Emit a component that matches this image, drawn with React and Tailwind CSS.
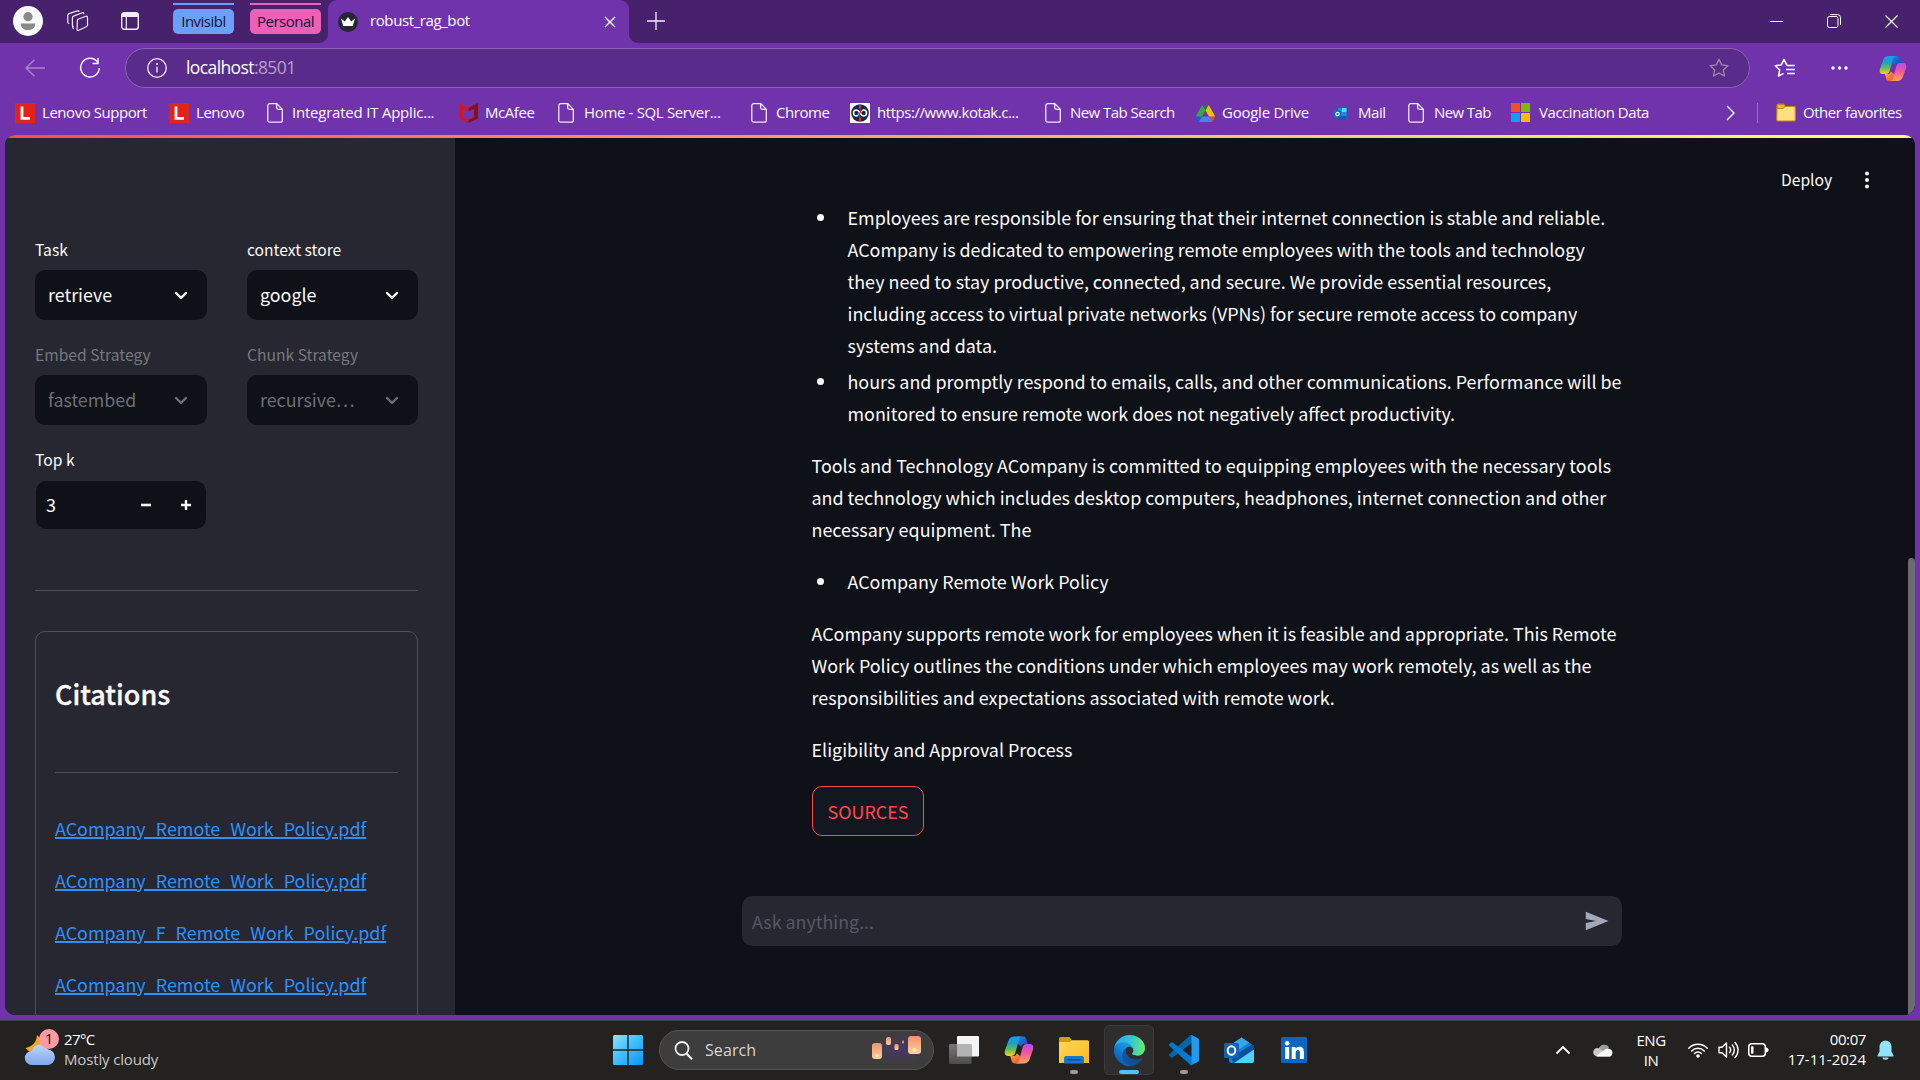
import React from "react";

const UI = "font-['Open_Sans','Noto_Sans',sans-serif]";
const APP = "font-['Noto_Sans_CJK_JP','Noto_Sans',sans-serif]";

/* ---------- icons ---------- */

const Svg = ({ w, h, box, className = "", children }) => (
  <svg width={w} height={h} viewBox={box || `0 0 ${w} ${h}`} fill="none" className={`shrink-0 ${className}`}>
    {children}
  </svg>
);

const CopilotIcon = ({ w, h, id }) => (
  <Svg w={w} h={h} box="0 0 30 28">
    <defs>
      <linearGradient id={`${id}a`} x1="0" y1="0" x2="0" y2="1">
        <stop offset="0" stopColor="#1b9df0" />
        <stop offset=".35" stopColor="#1c9fc4" />
        <stop offset=".7" stopColor="#6cc04e" />
        <stop offset="1" stopColor="#ffd21f" />
      </linearGradient>
      <linearGradient id={`${id}b`} x1="0" y1="0" x2="0" y2="1">
        <stop offset="0" stopColor="#b04df2" />
        <stop offset=".45" stopColor="#f2569b" />
        <stop offset="1" stopColor="#ffa759" />
      </linearGradient>
      <linearGradient id={`${id}c`} x1="0" y1="0" x2="1" y2="1">
        <stop offset="0" stopColor="#1a8ef0" />
        <stop offset="1" stopColor="#1b3fb8" />
      </linearGradient>
      <linearGradient id={`${id}d`} x1="0" y1="0" x2="1" y2="1">
        <stop offset="0" stopColor="#ffb22e" />
        <stop offset="1" stopColor="#f2453f" />
      </linearGradient>
    </defs>
    <path d="M13 .5h6c2.400 0 3 1.600 3.600 3.600l1.200 4h-3.500c-1.800 0-2.600 1-3.100 2.600L14 8z" fill={`url(#${id}c)`} />
    <path d="M17 27.500h-6c-2.400 0-3-1.600-3.600-3.600l-1.200-4h3.500c1.800 0 2.600-1 3.100-2.600L16 20z" fill={`url(#${id}d)`} />
    <path d="M10.500.5H18c-2.200.3-3 2.800-3.700 5.500l-2.600 9.600c-.7 2.600-1.700 4.400-4.200 4.400H4.300C1.200 20 .1 17.600 1 14.500L4.400 4.800C5.500 1.800 7.500.5 10.500.5z" fill={`url(#${id}a)`} />
    <path d="M19.500 27.500H12c2.200-.3 3-2.800 3.700-5.500l2.600-9.600c.7-2.600 1.700-4.400 4.200-4.400h3.200c3.100 0 4.200 2.400 3.300 5.500l-3.400 9.700c-1.100 3-3.100 4.300-6.100 4.300z" fill={`url(#${id}b)`} />
  </Svg>
);

const PageIcon = () => (
  <Svg w={16} h={20}>
    <path d="M2.800.7h7l5.500 5.500v11a2 2 0 0 1-2 2H2.800a2 2 0 0 1-2-2V2.700a2 2 0 0 1 2-2z M9.600.9v3.700a1.800 1.800 0 0 0 1.800 1.800h3.700" stroke="#efe6f7" strokeWidth="1.300" />
  </Svg>
);

const LenovoIcon = () => (
  <Svg w={20} h={20}>
    <path d="M0 0h20v20H0z" fill="#e2231a" />
    <path d="M7 3.500v11.800h8" stroke="#fff" strokeWidth="2.800" />
  </Svg>
);

const McAfeeIcon = () => (
  <Svg w={19} h={20}>
    <path d="M0 0l9.500 5v3.600L4 5.800v8.400l5.500 2.600V20L0 15.500z" fill="#d01620" />
    <path d="M19 0L9.500 5v3.600L15 5.800v8.400l-5.500 2.600V20L19 15.500z" fill="#85101c" />
  </Svg>
);

const KotakIcon = () => (
  <Svg w={20} h={20}>
    <path d="M0 0h20v20H0z" fill="#fff" />
    <circle cx="10" cy="10" r="8.800" fill="#12284f" />
    <path d="M10 10C8.500 7.600 7.500 7 6.500 7a3 3 0 0 0 0 6c1 0 2-.6 3.500-3s2.500-3 3.500-3a3 3 0 0 1 0 6c-1 0-2-.6-3.500-3z" stroke="#fff" strokeWidth="1.500" />
    <path d="M10 2v4M10 14v4" stroke="#e8232b" strokeWidth="2" />
    <path d="M11.500 7l-3 6" stroke="#e8232b" strokeWidth="1.300" />
  </Svg>
);

const DriveIcon = () => (
  <Svg w={19} h={17} box="0 0 87.300 78" className="mt-[2px]">
    <path d="m6.600 66.850 3.850 6.650c.8 1.400 1.950 2.500 3.300 3.300l13.750-23.800h-27.500c0 1.550.4 3.100 1.200 4.500z" fill="#0066da" />
    <path d="m43.650 25-13.750-23.800c-1.350.8-2.500 1.900-3.300 3.300l-25.400 44a9 9 0 0 0-1.200 4.500h27.500z" fill="#34a853" />
    <path d="m73.550 76.800c1.350-.8 2.500-1.900 3.300-3.300l1.600-2.750 7.650-13.250c.8-1.400 1.200-2.950 1.200-4.500h-27.502l5.852 11.500z" fill="#ea4335" />
    <path d="m43.650 25 13.750-23.800c-1.350-.8-2.900-1.200-4.500-1.200h-18.500c-1.600 0-3.150.45-4.500 1.200z" fill="#188038" />
    <path d="m59.800 53h-32.300l-13.750 23.800c1.350.8 2.900 1.200 4.500 1.200h50.800c1.600 0 3.150-.45 4.500-1.200z" fill="#4285f4" />
    <path d="m73.400 26.500-12.700-22c-.8-1.400-1.950-2.500-3.300-3.300l-13.750 23.800 16.150 28h27.450c0-1.550-.4-3.100-1.200-4.500z" fill="#fbbc04" />
  </Svg>
);

const MailIcon = () => (
  <Svg w={13} h={12} className="mt-[2px]">
    <path d="M4 0h8.500v12H4z" fill="#1490df" />
    <path d="M8 0h4.500v4H8z" fill="#50d9ff" />
    <path d="M4 8h8.500v4H4z" fill="#0a5bb0" />
    <path d="M0 2.500h7v7H0z" fill="#0f6cc4" />
    <circle cx="3.500" cy="6" r="1.700" stroke="#fff" strokeWidth="1.100" />
  </Svg>
);

const MicrosoftIcon = () => (
  <Svg w={19} h={19}>
    <path d="M0 0h9v9H0z" fill="#f25022" />
    <path d="M10 0h9v9h-9z" fill="#7fba00" />
    <path d="M0 10h9v9H0z" fill="#00a4ef" />
    <path d="M10 10h9v9h-9z" fill="#ffb900" />
  </Svg>
);

const FolderIcon = () => (
  <Svg w={20} h={19}>
    <path d="M1 2.500A1.500 1.500 0 0 1 2.500 1h5l2 2.500H18A1.300 1.300 0 0 1 19.300 5v11.500A1.500 1.500 0 0 1 17.800 18H2.200a1.500 1.500 0 0 1-1.500-1.500z" fill="#ffdf85" stroke="#b98a12" strokeWidth="1.200" />
    <path d="M1.200 5.500V2.700c0-.7.5-1.200 1.200-1.200h4.900L9 3.400 7.300 5.500z" fill="#f3bb27" stroke="#a67a10" strokeWidth=".8" />
  </Svg>
);

const Chevron = ({ dim }) => (
  <Svg w={14} h={9}>
    <path d="M2 2l5 4.800L12 2" stroke={dim ? "#6d6f74" : "#fafafa"} strokeWidth="2.400" strokeLinecap="round" strokeLinejoin="round" />
  </Svg>
);

/* ---------- browser chrome ---------- */

function TitleBar() {
  return (
    <div className="flex h-[43px] shrink-0 bg-[#7033ab]">
      <div className="flex w-[328px] items-start rounded-br-[9px] bg-[#48216d]">
        <div className="mt-[6px] ml-[13px]">
          <Svg w={30} h={30}>
            <circle cx="15" cy="15" r="15" fill="#fafafa" />
            <circle cx="15" cy="10.700" r="4.600" fill="#8a8a8a" />
            <path d="M7.800 17.500h14.400v.8c0 3.600-3.200 5.800-7.200 5.800s-7.200-2.200-7.200-5.800z" fill="#8a8a8a" />
          </Svg>
        </div>
        <div className="mt-[10px] ml-[24px]">
          <Svg w={22} h={22}>
            <g stroke="#efe6f7" strokeWidth="1.200" strokeLinejoin="round" strokeLinecap="round">
              <path d="M10.500 9.500l8.300-3.200q1.700-.5 1.700 1.200v7.500q0 1.200-1.200 1.700l-7.600 3.600q-1.700.7-1.700-1z" />
              <path d="M6.200 16.300q-.8 0-.8-1.300V7.800q0-1.200 1.200-1.700l8.600-3.400q1.300-.4 1.700.9" />
              <path d="M1.800 13.500q-1-.3-1-1.500V5.300q0-1.200 1.200-1.700L10.300.9q1.400-.4 1.800.6" />
              <path d="M6.300 18.500q-.9-1.200-.8-3" />
            </g>
          </Svg>
        </div>
        <div className="mt-[12px] ml-[32px]">
          <Svg w={18} h={18}>
            <rect x=".7" y=".7" width="16.600" height="16.600" rx="2.500" stroke="#f3edf9" strokeWidth="1.400" />
            <path d="M.7 5V3Q.7.7 3 .7h12q2.300 0 2.300 2.300v2z" fill="#f3edf9" />
            <path d="M5.300 5v12" stroke="#f3edf9" strokeWidth="1.200" />
          </Svg>
        </div>
        <div className="ml-[34px] flex gap-[16px] pt-[3px] text-[15px] tracking-[-0.5px] text-[#1b1033]">
          <div className="w-[61px] border-t-2 border-[#69a1fa] pt-[4px]">
            <div className="flex h-[25px] items-center justify-center rounded-[5px] bg-[#69a1fa] pb-px">Invisibl</div>
          </div>
          <div className="w-[71px] border-t-2 border-[#ee5fb7] pt-[4px]">
            <div className="flex h-[25px] items-center justify-center rounded-[5px] bg-[#ee5fb7] pb-px">Personal</div>
          </div>
        </div>
      </div>
      <div className="w-[301px] bg-[#48216d]">
        <div className="flex h-full items-center rounded-t-[9px] bg-[#7033ab] pl-[10px] text-white">
          <Svg w={20} h={20}>
            <circle cx="10" cy="10" r="10" fill="#262730" />
            <path d="M3 6.500l3.800 3L10 5l3.200 4.500 3.800-3-2.300 7.500H5.300z" fill="#fff" />
          </Svg>
          <span className="mb-[3px] ml-[12px] text-[15px] leading-[20px] tracking-[-0.4px]">robust_rag_bot</span>
          <Svg w={12} h={12} className="mr-[13px] ml-auto">
            <path d="M1 1l10 10M11 1L1 11" stroke="#fff" strokeWidth="1.400" />
          </Svg>
        </div>
      </div>
      <div className="flex flex-1 items-center rounded-bl-[9px] bg-[#48216d] pr-[22px] pb-px pl-[18px]">
        <Svg w={18} h={18}>
          <path d="M9 0v18M0 9h18" stroke="#f3edf9" strokeWidth="1.300" />
        </Svg>
        <Svg w={13} h={12} className="ml-auto">
          <path d="M0 6.500h13" stroke="#fff" />
        </Svg>
        <Svg w={14} h={14} className="ml-[44px]">
          <rect x=".5" y="2.500" width="10.500" height="11" rx="2" stroke="#fff" />
          <path d="M3 .6h7.500a3 3 0 0 1 3 3V11" stroke="#fff" />
        </Svg>
        <Svg w={13} h={13} className="ml-[44px]">
          <path d="M.5.5l12 12M12.500.5l-12 12" stroke="#fff" strokeWidth="1.100" />
        </Svg>
      </div>
    </div>
  );
}

const STAR = "M10 1.300l2.700 5.600 6.100.8-4.500 4.200 1.200 6.100L10 15.100 4.500 18l1.200-6.100L1.200 7.700l6.100-.8z";

function AddressBar() {
  return (
    <div className="flex h-[50px] shrink-0 items-center bg-[#7033ab] pr-[13px] pl-[25px]">
      <Svg w={20} h={18}>
        <path d="M20 9H1M9.500.7L1 9l8.500 8.300" stroke="#a884cd" strokeWidth="1.400" />
      </Svg>
      <Svg w={22} h={22} className="ml-[34px]">
        <path d="M18.600 5.300A9.300 9.300 0 1 0 20.300 11" stroke="#f7f2fb" strokeWidth="1.500" />
        <path d="M19 1v5.500h-5.500" stroke="#f7f2fb" strokeWidth="1.500" />
      </Svg>
      <div className="ml-[24px] flex h-[40px] w-[1625px] items-center rounded-full border border-[#8a63b1] bg-[#592b8a] pr-[20px] pl-[21px]">
        <Svg w={20} h={20}>
          <circle cx="10" cy="10" r="9.300" stroke="#f0e9f7" strokeWidth="1.300" />
          <path d="M10 8.800v5.700" stroke="#f0e9f7" strokeWidth="1.400" />
          <circle cx="10" cy="6" r="1" fill="#f0e9f7" />
        </Svg>
        <div className="mb-[2px] ml-[19px] text-[17.500px] leading-[22px] tracking-[-0.6px] text-white">
          localhost<span className="text-[#b2a0c6]">:8501</span>
        </div>
        <Svg w={20} h={20} className="ml-auto">
          <path d={STAR} stroke="#9b86a8" strokeWidth="1.400" strokeLinejoin="round" />
        </Svg>
      </div>
      <Svg w={21} h={20} className="ml-[24px]">
        <path d="M13.400 7L12.700 6.900 10 1.300 7.300 6.900 1.200 7.700l4.500 4.200L4.500 18l5-2.700" stroke="#fff" strokeWidth="1.500" strokeLinejoin="round" />
        <path d="M13 7.500h8M12 11.500h9M13 15.500h8" stroke="#fff" strokeWidth="1.500" />
      </Svg>
      <Svg w={17} h={4} className="ml-[36px]">
        <circle cx="2" cy="2" r="1.700" fill="#fff" />
        <circle cx="8.500" cy="2" r="1.700" fill="#fff" />
        <circle cx="15" cy="2" r="1.700" fill="#fff" />
      </Svg>
      <div className="ml-auto">
        <CopilotIcon w={28} h={27} id="ct" />
      </div>
    </div>
  );
}

const BOOKMARKS = [
  { width: "w-[154px]", gap: "gap-[7px]", icon: <LenovoIcon />, text: "Lenovo Support" },
  { width: "w-[98px]", gap: "gap-[7px]", icon: <LenovoIcon />, text: "Lenovo" },
  { width: "w-[192px]", gap: "gap-[9px]", tracking: "tracking-[-0.22px]", icon: <PageIcon />, text: "Integrated IT Applic..." },
  { width: "w-[99px]", gap: "gap-[7px]", icon: <McAfeeIcon />, text: "McAfee" },
  { width: "w-[193px]", gap: "gap-[10px]", tracking: "tracking-[-0.34px]", icon: <PageIcon />, text: "Home - SQL Server..." },
  { width: "w-[99px]", gap: "gap-[9px]", icon: <PageIcon />, text: "Chrome" },
  { width: "w-[195px]", gap: "gap-[7px]", icon: <KotakIcon />, text: "https://www.kotak.c..." },
  { width: "w-[151px]", gap: "gap-[9px]", tracking: "tracking-[-0.55px]", icon: <PageIcon />, text: "New Tab Search" },
  { width: "w-[138px]", gap: "gap-[7px]", tracking: "tracking-[-0.25px]", icon: <DriveIcon />, text: "Google Drive" },
  { width: "w-[74px]", gap: "gap-[11px]", icon: <MailIcon />, text: "Mail" },
  { width: "w-[103px]", gap: "gap-[10px]", tracking: "tracking-[-0.6px]", icon: <PageIcon />, text: "New Tab" },
  { width: "w-[215px]", gap: "gap-[9px]", icon: <MicrosoftIcon />, text: "Vaccination Data" },
];

function BookmarksBar() {
  return (
    <div className="flex h-[42px] shrink-0 items-center bg-[#7033ab] pb-[3px] pl-[15px] text-[15px] leading-[20px] tracking-[-0.45px] whitespace-nowrap text-[#fbf9fd]">
      {BOOKMARKS.map((b, i) => (
        <div key={i} className={`flex shrink-0 items-center ${b.width} ${b.gap}`}>
          {b.icon}
          <span className={`mb-[2px] ${b.tracking || ""}`}>{b.text}</span>
        </div>
      ))}
      <Svg w={9} h={16}>
        <path d="M1 1l7 7-7 7" stroke="#fff" strokeWidth="1.400" />
      </Svg>
      <div className="ml-[22px] h-[20px] w-px bg-[#9a70c4]" />
      <div className="ml-[18px] flex items-center gap-[7px]">
        <FolderIcon />
        <span className="mb-[2px]">Other favorites</span>
      </div>
    </div>
  );
}

/* ---------- application ---------- */

function SelectField({ label, value, dim }) {
  return (
    <div>
      <div className={`mb-[6px] h-[28px] text-[15.650px] leading-[27px] ${dim ? "text-[#77787d]" : "text-[#fafafa]"}`}>{label}</div>
      <div className="flex h-[50px] items-center justify-between rounded-[10px] bg-[#0e1117] pr-[19px] pl-[13px]">
        <span className={`mb-[2px] text-[17.850px] leading-[30px] ${dim ? "text-[#6d6f74]" : "text-[#fafafa]"}`}>{value}</span>
        <Chevron dim={dim} />
      </div>
    </div>
  );
}

const CITATIONS = [
  "ACompany_Remote_Work_Policy.pdf",
  "ACompany_Remote_Work_Policy.pdf",
  "ACompany_F_Remote_Work_Policy.pdf",
  "ACompany_Remote_Work_Policy.pdf",
];

function Sidebar() {
  return (
    <aside className="flex w-[450px] shrink-0 flex-col overflow-hidden bg-[#262730] pt-[98px] pr-[37px] pl-[30px]">
      <div className="grid shrink-0 grid-cols-[172px_171px] gap-x-[40px] gap-y-[21px]">
        <SelectField label="Task" value="retrieve" />
        <SelectField label="context store" value="google" />
        <SelectField label="Embed Strategy" value="fastembed" dim />
        <SelectField label="Chunk Strategy" value="recursive…" dim />
        <div>
          <div className="mb-[7px] h-[28px] text-[15.650px] leading-[27px] text-[#fafafa]">Top k</div>
          <div className="ml-px flex h-[48px] w-[170px] items-center rounded-[10px] bg-[#0e1117] pr-[15px] pl-[10px] text-[#fafafa]">
            <span className="mb-[2px] flex-1 text-[17.920px] leading-[30px]">3</span>
            <Svg w={10} h={10} className="mr-[30px]">
              <path d="M0 5h10" stroke="#fafafa" strokeWidth="2.600" />
            </Svg>
            <Svg w={10} h={10}>
              <path d="M0 5h10M5 0v10" stroke="#fafafa" strokeWidth="2.400" />
            </Svg>
          </div>
        </div>
      </div>
      <div className="mt-[61px] h-px shrink-0 bg-[#4e4f57]" />
      <section className="mt-[40px] h-[500px] shrink-0 rounded-[10px] border border-[#4e4f57] px-[19px] pt-[42px]">
        <h3 className="h-[40px] text-[27px] leading-[40px] font-medium text-[#fafafa] [-webkit-text-stroke:0.350px_#fafafa]">Citations</h3>
        <div className="mt-[58px] h-px bg-[#4e4f57]" />
        <div className="mt-[40px] flex flex-col items-start gap-[20px]">
          {CITATIONS.map((c, i) => (
            <a key={i} className="h-[32px] text-[17.920px] leading-[31px] whitespace-nowrap text-[#2e90fa] underline decoration-2 underline-offset-[1px]">
              {c}
            </a>
          ))}
        </div>
      </section>
    </aside>
  );
}

const Bullet = ({ children }) => (
  <div className="flex">
    <span className="mt-[13px] ml-[5px] size-[7px] shrink-0 rounded-full bg-[#fafafa]" />
    <p className="ml-[24px]">{children}</p>
  </div>
);

function Answer() {
  return (
    <div className="mt-[33px] ml-[356.500px] text-[17.920px] leading-[32px] whitespace-nowrap text-[#fafafa]">
      <Bullet>
        Employees are responsible for ensuring that their internet connection is stable and reliable.
        <br />
        ACompany is dedicated to empowering remote employees with the tools and technology
        <br />
        they need to stay productive, connected, and secure. We provide essential resources,
        <br />
        including access to virtual private networks (VPNs) for secure remote access to company
        <br />
        systems and data.
      </Bullet>
      <div className="mt-[4px]">
        <Bullet>
          hours and promptly respond to emails, calls, and other communications. Performance will be
          <br />
          monitored to ensure remote work does not negatively affect productivity.
        </Bullet>
      </div>
      <p className="mt-[20px]">
        Tools and Technology ACompany is committed to equipping employees with the necessary tools
        <br />
        and technology which includes desktop computers, headphones, internet connection and other
        <br />
        necessary equipment. The
      </p>
      <div className="mt-[20px]">
        <Bullet>ACompany Remote Work Policy</Bullet>
      </div>
      <p className="mt-[20px]">
        ACompany supports remote work for employees when it is feasible and appropriate. This Remote
        <br />
        Work Policy outlines the conditions under which employees may work remotely, as well as the
        <br />
        responsibilities and expectations associated with remote work.
      </p>
      <p className="mt-[20px]">Eligibility and Approval Process</p>
    </div>
  );
}

function MainPane() {
  return (
    <main className="flex min-w-0 flex-1 flex-col bg-[#0e1117]">
      <div className="flex h-[30px] items-start pt-[28px] pl-[1326px] text-[15.650px] leading-[28px] text-[#fafafa]">
        <span className="w-[83px]">Deploy</span>
        <Svg w={6} h={18} className="mt-[5px]">
          <circle cx="3" cy="2.500" r="2" fill="#fafafa" />
          <circle cx="3" cy="9" r="2" fill="#fafafa" />
          <circle cx="3" cy="15.500" r="2" fill="#fafafa" />
        </Svg>
      </div>
      <Answer />
      <button className="mt-[21px] ml-[357px] flex h-[50px] w-[112px] items-center justify-center rounded-[10px] border border-[#ff4b4b] bg-[#131720] pb-px text-[17.920px] leading-[30px] text-[#ff4b4b]">
        SOURCES
      </button>
      <div className="mt-[60px] ml-[287px] flex h-[50px] w-[880px] items-center justify-between rounded-[10px] bg-[#262730] pr-[13px] pl-[10px]">
        <span className="mb-px text-[17.850px] leading-[30px] text-[#555867]">Ask anything...</span>
        <Svg w={24} h={20}>
          <path d="M.8.800L23.500 10 .8 19.200V12L11 10 .8 8z" fill="#a3a8b8" />
        </Svg>
      </div>
    </main>
  );
}

function Viewport() {
  return (
    <div className="mx-[5px] flex h-[880px] shrink-0 flex-col overflow-hidden rounded-[10px] bg-[#0e1117]">
      <div className="h-[3px] shrink-0 bg-linear-to-r from-[#ff4b4b] to-[#fffd80]" />
      <div className="flex h-[877px]">
        <Sidebar />
        <MainPane />
        <div className="w-[7px] shrink-0 bg-[#0e1117] pt-[420px]">
          <div className="h-[457px] rounded-t-[4px] bg-[#6b6c6f]" />
        </div>
      </div>
    </div>
  );
}

/* ---------- taskbar ---------- */

const WeatherIcon = () => (
  <Svg w={38} h={40}>
    <defs>
      <linearGradient id="cloud" x1="0" y1="0" x2="0" y2="1">
        <stop offset="0" stopColor="#bcd7fb" />
        <stop offset="1" stopColor="#7fa5ee" />
      </linearGradient>
    </defs>
    <path d="M13 7c-.5 7-4 11.500-11.500 13 3 3.500 7 5.500 12 4.500 5-1 8-4 9-8z" fill="#f5a623" />
    <path d="M8 37a7 7 0 0 1-.4-14 9 9 0 0 1 16.500-1.500A7.800 7.800 0 0 1 24 37z" fill="url(#cloud)" />
    <circle cx="25" cy="11" r="10" fill="#ff99a4" />
    <text x="25" y="16.300" textAnchor="middle" fontSize="15" fill="#241416">1</text>
  </Svg>
);

const WindowsIcon = () => (
  <Svg w={30} h={30}>
    <defs>
      <linearGradient id="win" x1="0" y1="0" x2="30" y2="30" gradientUnits="userSpaceOnUse">
        <stop offset="0" stopColor="#8ce2ff" />
        <stop offset=".5" stopColor="#3dbdfb" />
        <stop offset="1" stopColor="#0b95fa" />
      </linearGradient>
    </defs>
    <path d="M1.500 0H14.300v14.300H0V1.500A1.500 1.500 0 0 1 1.500 0zM15.700 0H28.500A1.500 1.500 0 0 1 30 1.500V14.300H15.700zM0 15.700h14.300V30H1.500A1.500 1.500 0 0 1 0 28.500zM15.700 15.700H30V28.500a1.500 1.500 0 0 1-1.500 1.500H15.700z" fill="url(#win)" />
  </Svg>
);

const Lanterns = () => (
  <Svg w={60} h={30}>
    <defs>
      <radialGradient id="glow">
        <stop offset="0" stopColor="#47386c" />
        <stop offset="1" stopColor="#47386c" stopOpacity="0" />
      </radialGradient>
      <linearGradient id="lantern" x1="0" y1="0" x2="0" y2="1">
        <stop offset="0" stopColor="#f2926c" />
        <stop offset="1" stopColor="#ffcf9e" />
      </linearGradient>
    </defs>
    <ellipse cx="31" cy="15" rx="27" ry="15" fill="url(#glow)" />
    <rect x="4" y="9" width="10" height="16" rx="3" fill="url(#lantern)" />
    <rect x="18" y="3" width="5" height="8" rx="2" fill="url(#lantern)" />
    <rect x="26.500" y="10" width="4" height="6" rx="1.500" fill="url(#lantern)" />
    <rect x="34" y="6.500" width="2" height="3" rx="1" fill="#f2926c" />
    <rect x="40" y="2" width="13" height="18" rx="3" fill="url(#lantern)" />
    <circle cx="46.500" cy="16" r="2" fill="#fff0c0" />
    <circle cx="9" cy="21.500" r="1.500" fill="#fff0c0" />
  </Svg>
);

const TaskViewIcon = () => (
  <Svg w={30} h={28}>
    <defs>
      <linearGradient id="tvb" x1="0" y1="0" x2="0" y2="1">
        <stop offset="0" stopColor="#777" />
        <stop offset="1" stopColor="#4c4c4c" />
      </linearGradient>
    </defs>
    <rect x="8" y="0" width="22" height="20.500" rx="1" fill="#f3f3f3" />
    <rect x="0" y="8" width="22.500" height="20" rx="1" fill="url(#tvb)" />
    <path d="M8 8h14.500v12.500H8z" fill="#b3b3b3" />
  </Svg>
);

const ExplorerIcon = () => (
  <Svg w={30} h={27}>
    <defs>
      <linearGradient id="fold" x1="0" y1="0" x2="1" y2="1">
        <stop offset="0" stopColor="#ffd75e" />
        <stop offset="1" stopColor="#fbb917" />
      </linearGradient>
    </defs>
    <path d="M0 1.500A1.500 1.500 0 0 1 1.500 0h9L13 3.500V8H0z" fill="#d99a06" />
    <path d="M0 5h11l2-1.800h15.500A1.500 1.500 0 0 1 30 4.700V26H0z" fill="url(#fold)" />
    <path d="M5 26.500V21.500A2.500 2.500 0 0 1 7.500 19h15a2.500 2.500 0 0 1 2.500 2.500v5z" fill="#1279cf" />
    <path d="M8.500 22.800h13" stroke="#0a4e93" strokeWidth="1.500" />
  </Svg>
);

const EdgeIcon = () => (
  <Svg w={31} h={31} box="0 0 256 256">
    <defs>
      <linearGradient id="eg1" x1="63" y1="177" x2="241" y2="177" gradientUnits="userSpaceOnUse">
        <stop offset="0" stopColor="#0c59a4" />
        <stop offset="1" stopColor="#114a8b" />
      </linearGradient>
      <linearGradient id="eg2" x1="157" y1="100" x2="46" y2="221" gradientUnits="userSpaceOnUse">
        <stop offset="0" stopColor="#1b9de2" />
        <stop offset=".5" stopColor="#1383d8" />
        <stop offset="1" stopColor="#0b5fb5" />
      </linearGradient>
      <linearGradient id="eg3" x1="10" y1="90" x2="250" y2="120" gradientUnits="userSpaceOnUse">
        <stop offset="0" stopColor="#2aa5e8" />
        <stop offset=".45" stopColor="#2fc2df" />
        <stop offset="1" stopColor="#66eb6e" />
      </linearGradient>
    </defs>
    <path d="M231 190.500c-3.400 1.800-6.900 3.400-10.500 4.700-11.500 4.300-23.600 6.500-35.900 6.500-47.300 0-88.500-32.500-88.500-74.300.1-11.400 6.400-21.900 16.400-27.300-42.800 1.800-53.800 46.400-53.800 72.500 0 74 68.100 81.400 82.800 81.400 7.900 0 19.800-2.300 27-4.600l1.300-.4c27.600-9.500 51-28.100 66.600-52.800 1.200-1.900.6-4.300-1.200-5.500-1.300-.8-2.900-.9-4.200-.2z" fill="url(#eg1)" />
    <path d="M105.700 241.400c-8.900-5.500-16.600-12.800-22.700-21.300-26.300-36-18.400-86.500 17.600-112.800 3.800-2.700 7.700-5.200 11.900-7.200 3.100-1.500 8.400-4.100 15.500-4 10.100.1 19.600 4.900 25.700 13 4 5.400 6.300 11.900 6.400 18.700 0-.2 24.500-79.600-80-79.600C36.200 48.200.1 89.900.1 126.500c-.2 19.300 4 38.500 12.100 56 27.600 58.800 94.800 87.600 156.400 67.100-21.100 6.600-44.100 3.700-62.900-8.200z" fill="url(#eg2)" />
    <path d="M152.300 148.900c-.9 1-3.400 2.500-3.400 5.600 0 2.600 1.700 5.200 4.800 7.300 14.300 10 41.400 8.600 41.500 8.600 10.700 0 21.100-2.900 30.300-8.300 18.900-11 30.500-31.300 30.500-53.200.3-22.500-8-37.400-11.300-44C223.500 23.900 177.700 0 128 0 58 0 1 56.200 0 126.200c.5-36.500 36.800-66 80-66 3.500 0 23.500.3 42 10.100 16.300 8.600 24.900 18.900 30.800 29.200 6.200 10.700 7.300 24.100 7.300 29.500s-2.700 13.300-7.800 19.900z" fill="url(#eg3)" />
  </Svg>
);

const VSCodeIcon = () => (
  <Svg w={30} h={30} box="0 0 100 100">
    <path d="M96.500 10.800L75.900.9c-2.400-1.200-5.200-.7-7.100 1.200L1.300 63.600c-1.800 1.700-1.800 4.500 0 6.200l5.500 5c1.500 1.300 3.700 1.400 5.300.2L93.400 13.400c2.700-2.100 6.600-.1 6.600 3.300v-.3c0-2.400-1.400-4.500-3.500-5.600z" fill="#0065a9" />
    <path d="M96.500 89.200l-20.600 9.900c-2.400 1.200-5.200.7-7.100-1.200L1.300 36.400c-1.800-1.700-1.800-4.500 0-6.200l5.500-5c1.500-1.300 3.700-1.400 5.300-.2l81.300 61.600c2.700 2.100 6.600.1 6.600-3.300v.3c0 2.400-1.400 4.500-3.500 5.600z" fill="#007acc" />
    <path d="M75.900 99.100c-2.400 1.200-5.200.7-7.100-1.200 2.300 2.300 6.200.7 6.200-2.600V4.700c0-3.300-3.900-4.900-6.200-2.600 1.900-1.900 4.700-2.400 7.100-1.200l20.600 9.900c2.200 1 3.500 3.200 3.500 5.600v67.200c0 2.400-1.400 4.600-3.500 5.600z" fill="#1f9cf0" />
  </Svg>
);

const OutlookIcon = () => (
  <Svg w={30} h={27}>
    <path d="M5 9L17.500.5 30 9v14.500a2.500 2.500 0 0 1-2.500 2.500h-20A2.500 2.500 0 0 1 5 23.500z" fill="#1180d8" />
    <path d="M10 5.500L17.500.5 25 5.500 13 14z" fill="#35a6ea" />
    <path d="M28 7.500l2 1.500v5L13 26H9l-1-6z" fill="#0a4fa0" />
    <path d="M30 12.500V23.500a2.500 2.500 0 0 1-2.500 2.500H10z" fill="#4bd3fa" />
    <rect x="0" y="6" width="15" height="15" rx="1.500" fill="#0f62bd" />
    <ellipse cx="7.500" cy="13.500" rx="3.800" ry="4.200" stroke="#fff" strokeWidth="2" />
  </Svg>
);

const LinkedInIcon = () => (
  <Svg w={26} h={26}>
    <rect width="26" height="26" rx="1.500" fill="#0a66c2" />
    <circle cx="6.200" cy="6.300" r="2.300" fill="#fff" />
    <path d="M4.200 10h4v12h-4zM10.700 10h3.800v1.700c.6-1.100 1.900-2 3.900-2 3.600 0 4.500 2.300 4.500 5.600V22h-4v-5.900c0-1.500-.2-3-1.900-3s-2.300 1.300-2.300 3V22h-4z" fill="#fff" />
  </Svg>
);

const TASK_APPS = [
  { icon: <TaskViewIcon /> },
  { icon: <CopilotIcon w={30} h={28} id="cb" /> },
  { icon: <ExplorerIcon />, open: true },
  { icon: <EdgeIcon />, active: true },
  { icon: <VSCodeIcon />, open: true },
  { icon: <OutlookIcon /> },
  { icon: <LinkedInIcon /> },
];

function Taskbar() {
  return (
    <footer className="flex h-[60px] shrink-0 items-center border-t border-[#3f3f42] bg-[#232220] pb-px text-[15px] leading-[20px] text-white">
      <div className="flex w-[613px] items-center pl-[24px]">
        <div className="-mt-[4px]">
          <WeatherIcon />
        </div>
        <div className="mb-[3px] ml-[2px] tracking-[-0.15px]">
          <div className="tracking-[-0.6px]">27°C</div>
          <div className="text-[#c8c8c8]">Mostly cloudy</div>
        </div>
      </div>
      <WindowsIcon />
      <div className="ml-[16px] flex h-[40px] w-[275px] items-center rounded-full border border-[#545454] bg-[#3d3d3d] pr-[5px] pl-[14px]">
        <Svg w={19} h={19}>
          <circle cx="8" cy="7.500" r="6.500" stroke="#f0f0f0" strokeWidth="1.800" />
          <path d="M12.500 12.500l5.500 5.700" stroke="#f0f0f0" strokeWidth="2" />
        </Svg>
        <span className="mb-px ml-[12px] text-[16px] tracking-[0.1px] text-[#d6d6d6]">Search</span>
        <div className="mb-[3px] ml-auto">
          <Lanterns />
        </div>
      </div>
      <div className="ml-[5px] flex gap-[5px]">
        {TASK_APPS.map((a, i) => (
          <div
            key={i}
            className={`relative flex h-[50px] w-[50px] items-center justify-center rounded-[5px] ${a.active ? "border border-[#3c3b3a] bg-[#2f2e2d]" : ""}`}
          >
            {a.icon}
            {a.open && <span className="absolute bottom-px left-[21px] h-[4px] w-[8px] rounded-full bg-[#9a9a9a]" />}
            {a.active && <span className="absolute bottom-0 left-[14px] h-[4px] w-[20px] rounded-full bg-[#4cc2ff]" />}
          </div>
        ))}
      </div>
      <Svg w={16} h={10} className="ml-[236px]">
        <path d="M1.500 8.500L8 2l6.500 6.500" stroke="#fff" strokeWidth="1.800" />
      </Svg>
      <Svg w={21} h={14} className="ml-[22px]">
        <path d="M5.500 6A6 6 0 0 1 16 4l-3 5H3z" fill="#9d9d9d" />
        <path d="M4.500 13.500a4.300 4.300 0 1 1 2-8.100L18 13.500z" fill="#c9c9c9" />
        <path d="M3 13l9-6.500a5.500 5.500 0 0 1 4-.8 4 4 0 0 1 .5 7.800H4.500z" fill="#fafafa" />
      </Svg>
      <div className="mb-px ml-[20px] w-[34px] text-center tracking-[-0.45px]">
        ENG
        <br />
        IN
      </div>
      <Svg w={20} h={16} className="ml-[20px]">
        <g stroke="#fff" strokeWidth="1.500" strokeLinecap="round">
          <path d="M.8 6.200a12.800 12.800 0 0 1 18.400 0" />
          <path d="M3.700 8.900a8.800 8.800 0 0 1 12.600 0" />
          <path d="M6.500 11.500a4.900 4.900 0 0 1 7 0" />
        </g>
        <circle cx="10" cy="14" r="1.800" fill="#fff" />
      </Svg>
      <Svg w={21} h={18} className="ml-[10px]">
        <g stroke="#fff" strokeWidth="1.400" strokeLinecap="round" strokeLinejoin="round">
          <path d="M1 6.200h3L8.500 2v14L4 11.800H1z" />
          <path d="M11.500 6.300a4 4 0 0 1 0 5.400M14.300 3.900a7.400 7.400 0 0 1 0 10.200M17 1.500a10.800 10.800 0 0 1 0 15" />
        </g>
      </Svg>
      <Svg w={21} h={14} className="ml-[9px]">
        <rect x=".8" y=".8" width="16.500" height="12.400" rx="3" stroke="#fff" strokeWidth="1.500" />
        <rect x="3" y="3.200" width="2.500" height="7.600" rx="1" fill="#fff" />
        <path d="M18.500 4.800a2.300 2.300 0 0 1 0 4.400z" fill="#fff" stroke="#fff" />
      </Svg>
      <div className="mb-[3px] w-[97px] text-right">
        <div className="tracking-[-0.4px]">00:07</div>
        <div>17-11-2024</div>
      </div>
      <Svg w={17} h={20} className="ml-[11px]">
        <path d="M8.500.5a6 6 0 0 1 6 6v5l2 4v.9H.5v-.9l2-4v-5a6 6 0 0 1 6-6z" fill="#8fe3fb" />
        <path d="M5.500 17.500h6a3 2.200 0 0 1-6 0z" fill="#8fe3fb" />
      </Svg>
    </footer>
  );
}

export default function App() {
  return (
    <div className={`flex h-[1080px] w-[1920px] flex-col overflow-hidden bg-[#7033ab] ${UI}`}>
      <TitleBar />
      <AddressBar />
      <BookmarksBar />
      <div className={`h-[885px] shrink-0 ${APP}`}>
        <Viewport />
      </div>
      <Taskbar />
    </div>
  );
}
